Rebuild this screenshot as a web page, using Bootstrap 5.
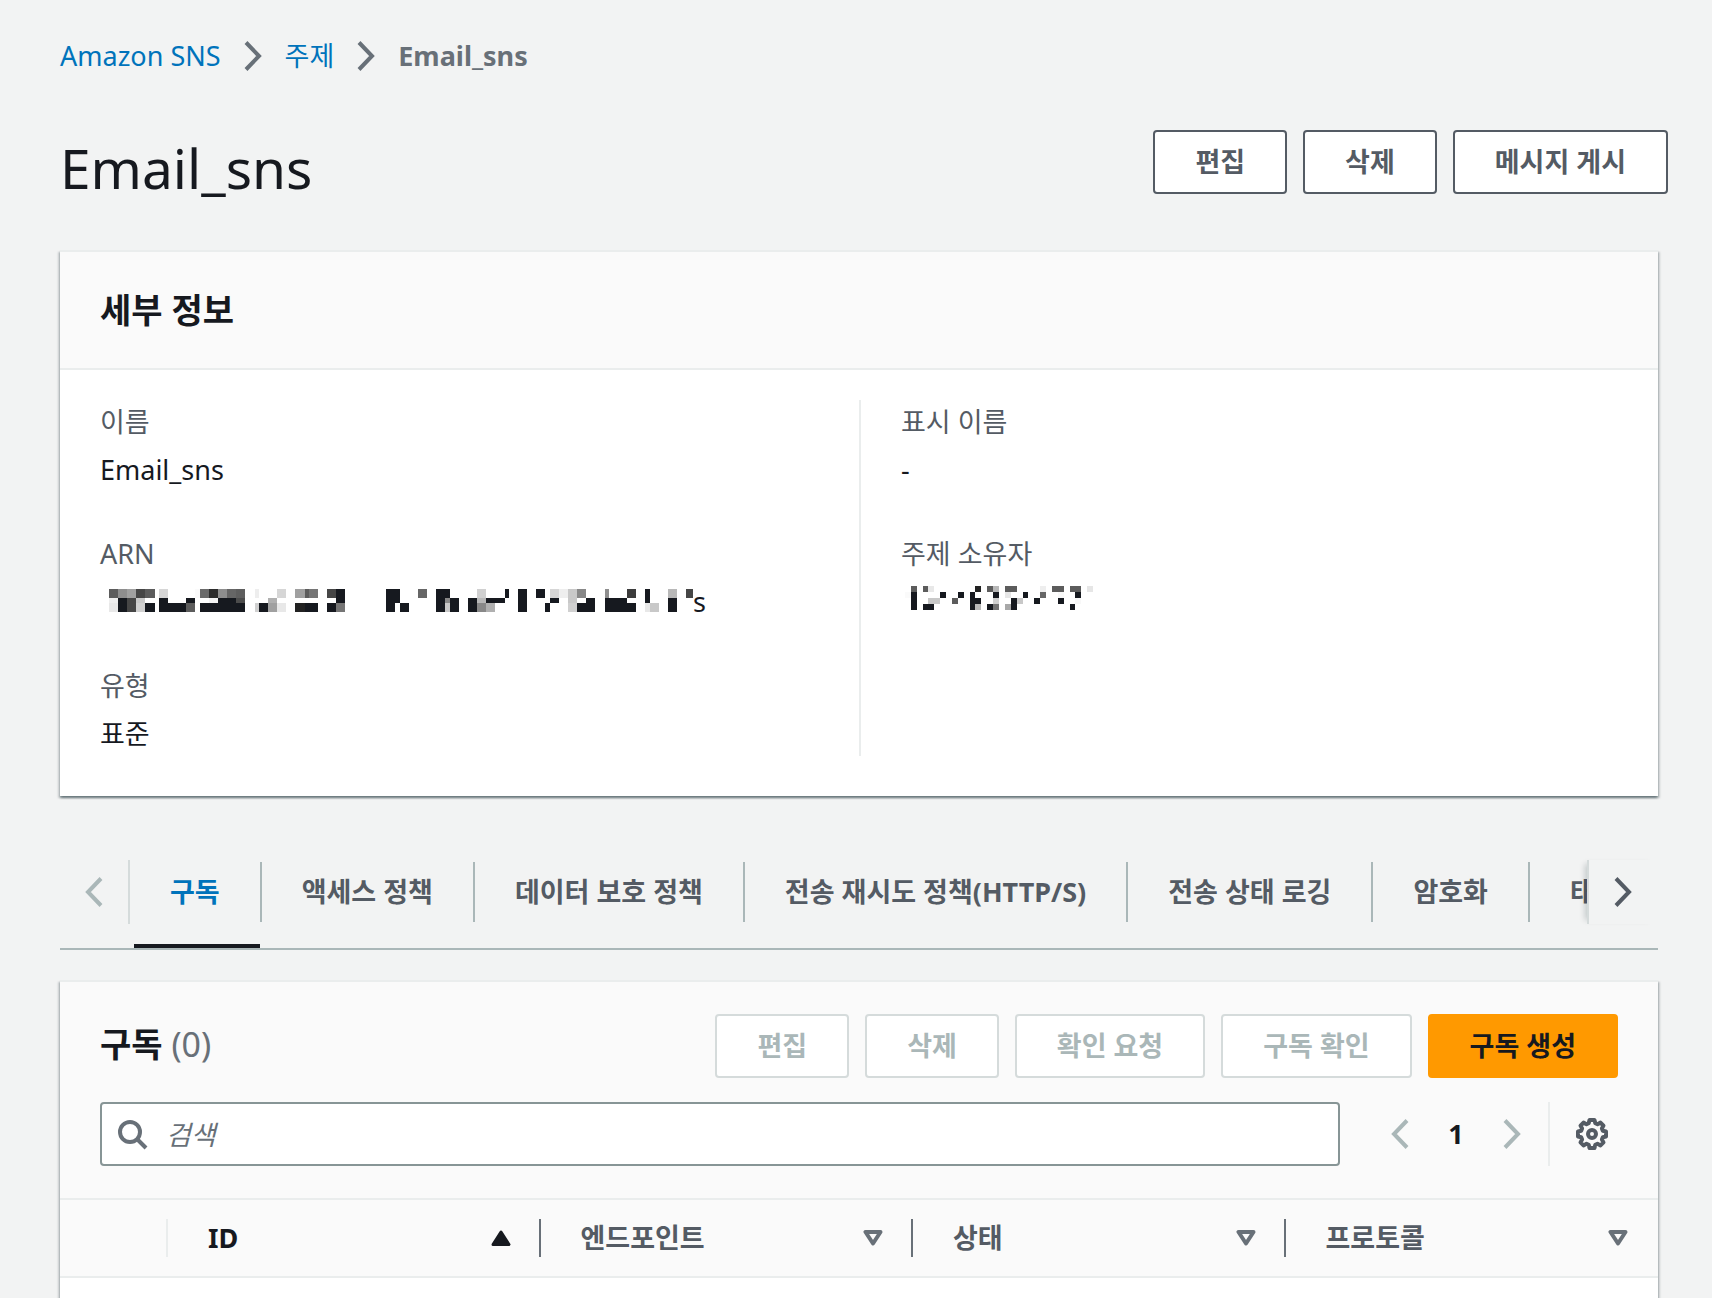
<!DOCTYPE html>
<html lang="ko">
<head>
<meta charset="utf-8">
<meta name="viewport" content="width=device-width, initial-scale=1">
<title>Email_sns - Amazon SNS</title>
<link href="https://cdn.jsdelivr.net/npm/bootstrap@5.3.0/dist/css/bootstrap.min.css" rel="stylesheet">
<style>
body{background:#f2f3f3;color:#16191f;font-family:"Noto Sans","Noto Sans CJK KR",sans-serif;font-size:27px;line-height:44px}
button,input{font-family:inherit}
.page{padding:34px 54px 0 60px}
.crumbs{gap:23px;margin-bottom:52px;color:#687078}
.crumbs a{color:#0073bb;text-decoration:none}
.crumbs .current{font-weight:700}
svg{display:block;flex:none}
.chev{width:18px;height:30px;fill:none;stroke:currentColor;stroke-width:4}
.title-row{margin-bottom:48px}
.title-row h1{font-size:55px;line-height:68px;font-weight:400;padding-top:4px}
.title-row .actions{margin-right:-10px}
.actions{gap:16px}
.btn-aws{--bs-btn-color:#545b64;--bs-btn-bg:#fff;--bs-btn-border-color:#545b64;--bs-btn-border-width:2px;--bs-btn-border-radius:4px;--bs-btn-font-weight:700;--bs-btn-font-size:27px;--bs-btn-line-height:44px;--bs-btn-padding-x:40px;--bs-btn-padding-y:8px;--bs-btn-disabled-color:#aab7b8;--bs-btn-disabled-bg:#fff;--bs-btn-disabled-border-color:#d5dbdb;--bs-btn-disabled-opacity:1}
.btn-create{--bs-btn-color:#16191f;--bs-btn-bg:#ff9900;--bs-btn-border-color:#ff9900}
.panel{background:#fff;border-top:2px solid #eaeded;box-shadow:0 2px 2px rgba(0,28,36,.4),2px 2px 2px rgba(0,28,36,.15),-2px 2px 2px rgba(0,28,36,.15)}
.panel h2{font-size:34px;line-height:44px;font-weight:700}
.panel-head{background:#fafafa;border-bottom:2px solid #eaeded}
.panel-head.plain{padding:36px 40px}
.panel-head.tools{padding:32px 40px}
.details{padding:30px 40px 40px}
.details dl{gap:40px}
.details dt{font-weight:400;color:#545b64;margin-bottom:4px}
.details .second{border-left:2px solid #eaeded;padding-left:40px}
.tabs-bar{margin-top:64px;margin-bottom:30px;border-bottom:2px solid #aab7b8}
.tab-scroll{flex:none;height:64px;padding:0;border:0;background:none;color:#aab7b8}
.tab-scroll.prev{width:70px;padding-left:25px;border-right:2px solid #d5dbdb;margin-right:4px}
.tab-scroll.next{width:71px;padding-left:25px;border-left:2px solid #d5dbdb;color:#545b64;background:#f2f3f3;box-shadow:-6px 0 6px -4px rgba(0,28,36,.2);position:relative}
.tab-list{min-width:0}
.tab-item{white-space:nowrap}
.tab-item button{height:88px;padding:0 40px 20px;border:0;border-bottom:4px solid transparent;border-radius:0;background:none;color:#545b64;font-weight:700;line-height:64px}
.tab-item .active{padding-left:36px;color:#0073bb;border-color:#16191f}
.tab-item::after{content:"";width:2px;height:60px;margin-top:2px;background:#aab7b8}
.count{color:#687078;font-weight:400}
.search-icon{left:18px;top:18px;z-index:2}
.search-box{height:64px;border:2px solid #879596;border-radius:4px;padding:8px 16px 8px 64px;font-size:27px;line-height:44px}
.search-box::placeholder{color:#687078;font-style:italic;opacity:1}
.tool-row{margin-top:24px}
.pager{margin-left:32px}
.pager button,.gear{height:64px;padding:0;border:0;background:none;color:#aab7b8}
.pager button{width:56px}
.pager .now{width:56px;color:#16191f;font-weight:700}
.pager-rule{width:2px;height:64px;background:#eaeded;margin:0 16px 0 8px}
.gear{width:52px}
.gear.gear{color:#545b64}
.subs{table-layout:fixed;border-collapse:separate;border-spacing:0}
.subs th{padding:19px 0;background:#fafafa;border-bottom:2px solid #eaeded;color:#545b64;font-weight:700}
.subs .pick{width:108px}
.th-in{height:38px;padding:0 28px 0 40px;border-right:2px solid #687078;line-height:38px}
.pick .th-in{border-color:#eaeded}
.subs th:last-child .th-in{border:0;padding-right:30px}
.subs .sorted{color:#16191f}
</style>
<script src="https://cdn.jsdelivr.net/npm/bootstrap@5.3.0/dist/js/bootstrap.bundle.min.js" defer></script>
</head>
<body>
<div class="page d-flex flex-column min-vh-100">
  <nav aria-label="breadcrumb">
    <ol class="crumbs list-unstyled d-flex align-items-center">
      <li><a href="#">Amazon SNS</a></li>
      <li aria-hidden="true"><svg class="chev" viewBox="0 0 18 30"><path d="M2 1.500L15 15L2 28.500"/></svg></li>
      <li><a href="#">주제</a></li>
      <li aria-hidden="true"><svg class="chev" viewBox="0 0 18 30"><path d="M2 1.500L15 15L2 28.500"/></svg></li>
      <li class="current" aria-current="page">Email_sns</li>
    </ol>
  </nav>

  <header class="title-row d-flex justify-content-between align-items-start">
    <h1 class="mb-0">Email_sns</h1>
    <div class="actions d-flex">
      <button type="button" class="btn btn-aws">편집</button>
      <button type="button" class="btn btn-aws">삭제</button>
      <button type="button" class="btn btn-aws">메시지 게시</button>
    </div>
  </header>

  <section class="panel">
    <div class="panel-head plain"><h2 class="mb-0">세부 정보</h2></div>
    <div class="details">
      <div class="row g-0">
        <dl class="col-6 d-flex flex-column mb-0">
          <div><dt>이름</dt><dd class="mb-0">Email_sns</dd></div>
          <div><dt>ARN</dt><dd class="mb-0 d-flex align-items-center"><svg id="arn" width="593" height="27" viewBox="24 207 1453 81" preserveAspectRatio="none" shape-rendering="crispEdges" aria-hidden="true"></svg>s</dd></div>
          <div><dt>유형</dt><dd class="mb-0">표준</dd></div>
        </dl>
        <dl class="second col-6 d-flex flex-column mb-0">
          <div><dt>표시 이름</dt><dd class="mb-0">-</dd></div>
          <div><dt>주제 소유자</dt><dd class="mb-0"><svg id="owner" width="200" height="36" viewBox="186 570 600 108" shape-rendering="crispEdges" aria-hidden="true"></svg></dd></div>
        </dl>
      </div>
    </div>
  </section>

  <div class="tabs-bar d-flex">
    <button type="button" class="tab-scroll prev" aria-label="이전 탭" disabled><svg class="chev" viewBox="0 0 18 30"><path d="M16 1.500L3 15L16 28.500"/></svg></button>
    <ul class="tab-list nav flex-nowrap flex-grow-1 overflow-hidden" role="tablist">
      <li class="tab-item d-flex" role="presentation"><button type="button" class="active" role="tab" aria-selected="true">구독</button></li>
      <li class="tab-item d-flex" role="presentation"><button type="button" role="tab">액세스 정책</button></li>
      <li class="tab-item d-flex" role="presentation"><button type="button" role="tab">데이터 보호 정책</button></li>
      <li class="tab-item d-flex" role="presentation"><button type="button" role="tab">전송 재시도 정책(HTTP/S)</button></li>
      <li class="tab-item d-flex" role="presentation"><button type="button" role="tab">전송 상태 로깅</button></li>
      <li class="tab-item d-flex" role="presentation"><button type="button" role="tab">암호화</button></li>
      <li class="tab-item d-flex" role="presentation"><button type="button" role="tab">태그</button></li>
    </ul>
    <button type="button" class="tab-scroll next" aria-label="다음 탭"><svg class="chev" viewBox="0 0 18 30"><path d="M2 1.500L15 15L2 28.500"/></svg></button>
  </div>

  <section class="panel flex-grow-1">
    <div class="panel-head tools">
      <div class="d-flex justify-content-between align-items-start">
        <h2 class="mb-0 pt-2">구독 <span class="count">(0)</span></h2>
        <div class="actions d-flex">
          <button type="button" class="btn btn-aws" disabled>편집</button>
          <button type="button" class="btn btn-aws" disabled>삭제</button>
          <button type="button" class="btn btn-aws" disabled>확인 요청</button>
          <button type="button" class="btn btn-aws" disabled>구독 확인</button>
          <button type="button" class="btn btn-aws btn-create">구독 생성</button>
        </div>
      </div>
      <div class="tool-row d-flex align-items-center">
        <div class="position-relative flex-grow-1">
          <svg class="search-icon position-absolute" width="30" height="30" viewBox="0 0 30 30" fill="none" stroke="#687078" stroke-width="4" aria-hidden="true"><circle cx="12" cy="12" r="10"/><path d="M19 19L28 28"/></svg>
          <input type="search" class="search-box form-control" placeholder="검색" aria-label="검색">
        </div>
        <div class="pager d-flex">
          <button type="button" class="d-flex align-items-center justify-content-center" aria-label="이전 페이지" disabled><svg class="chev" viewBox="0 0 18 30"><path d="M16 1.500L3 15L16 28.500"/></svg></button>
          <button type="button" class="now">1</button>
          <button type="button" class="d-flex align-items-center justify-content-center" aria-label="다음 페이지" disabled><svg class="chev" viewBox="0 0 18 30"><path d="M2 1.500L15 15L2 28.500"/></svg></button>
        </div>
        <span class="pager-rule"></span>
        <button type="button" class="gear d-flex align-items-center justify-content-center" aria-label="기본 설정"><svg width="32" height="32" viewBox="0 0 32 32" fill="none" stroke="currentColor" stroke-width="4" stroke-linejoin="round" aria-hidden="true"><path d="M13.500 2h5l.8 3.200l2.200 1l3-1.600l3 3l-1.600 2.900l.9 2.200l3.200.8v5l-3.200.8l-.9 2.200l1.600 2.900l-3 3l-3-1.600l-2.200 1l-.8 3.200h-5l-.8-3.200l-2.200-1l-3 1.600l-3-3l1.600-2.900l-.9-2.200l-3.200-.8v-5l3.200-.8l.9-2.200l-1.600-2.900l3-3l3 1.600l2.200-1z"/><circle cx="16" cy="16" r="4"/></svg></button>
      </div>
    </div>
    <table class="subs w-100">
      <thead>
        <tr>
          <th class="pick" aria-label="선택"><div class="th-in"></div></th>
          <th class="sorted" aria-sort="ascending"><div class="th-in d-flex align-items-center justify-content-between">ID<svg width="20" height="16" viewBox="0 0 20 16" fill="currentColor" stroke="currentColor" stroke-width="3" stroke-linejoin="round" aria-hidden="true"><path d="M10 2L18 14.500H2z"/></svg></div></th>
          <th><div class="th-in d-flex align-items-center justify-content-between">엔드포인트<svg width="20" height="16" viewBox="0 0 20 16" fill="none" stroke="#687078" stroke-width="4" stroke-linejoin="round" aria-hidden="true"><path d="M2.500 2H17.500L10 13.500z"/></svg></div></th>
          <th><div class="th-in d-flex align-items-center justify-content-between">상태<svg width="20" height="16" viewBox="0 0 20 16" fill="none" stroke="#687078" stroke-width="4" stroke-linejoin="round" aria-hidden="true"><path d="M2.500 2H17.500L10 13.500z"/></svg></div></th>
          <th><div class="th-in d-flex align-items-center justify-content-between">프로토콜<svg width="20" height="16" viewBox="0 0 20 16" fill="none" stroke="#687078" stroke-width="4" stroke-linejoin="round" aria-hidden="true"><path d="M2.500 2H17.500L10 13.500z"/></svg></div></th>
        </tr>
      </thead>
      <tbody></tbody>
    </table>
  </section>
</div>
<script>
// Masked identifiers: each row is [top, height, "left-right:grey ..."], k is the text colour.
function mosaic(id, rows) {
  let out = '';
  for (const [y, h, cells] of rows)
    for (const cell of cells.split(' ')) {
      const [span, tone] = cell.split(':');
      const [a, b] = span.split('-').map(Number);
      const fill = tone === 'k' ? '#16191f' : '#' + tone.repeat(3);
      out += `<rect x="${a}" y="${y}" width="${b - a}" height="${h}" fill="${fill}"/>`;
    }
  document.getElementById(id).innerHTML = out;
}
mosaic('arn', [
  [207, 27, '47-69:5c 69-91:8e 91-113:a0 113-135:46 135-159:5c 169-191:d6 257-269:fa 269-292:6a 292-314:2c 314-336:8e 336-358:66 358-380:5e 404-414:ee 458-480:d6 502-527:a0 527-537:5c 537-559:75 581-603:46 603-625:k 725-759:k 804-826:66 848-882:k 948-970:d0 1017-1027:k 1049-1071:k 1093-1115:k 1127-1149:d6 1149-1171:ee 1171-1193:c8 1193-1215:88 1262-1272:8e 1316-1338:3c 1360-1372:k 1416-1438:b8 1460-1482:46'],
  [234, 15, '47-69:ee 69-91:k 91-113:46 113-135:c8 169-191:k 235-257:k 292-314:f4 314-358:k 358-380:4c 436-458:b0 603-625:k 725-759:k 848-870:k 870-882:88 882-904:k 926-948:k 948-970:b8 970-1017:k 1049-1071:k 1127-1149:k 1171-1193:c8 1215-1237:k 1262-1316:k 1360-1372:k 1416-1438:k'],
  [249, 27, '47-69:e8 69-91:k 91-113:46 113-135:d0 135-159:k 169-235:k 235-257:5c 269-380:k 404-414:d0 414-436:k 436-458:a0 458-480:e8 502-527:22 527-559:k 581-603:k 603-625:75 725-747:k 759-782:k 848-870:k 870-882:c8 882-904:k 926-948:k 948-970:88 970-992:b0 1049-1071:k 1115-1127:k 1171-1193:d0 1193-1237:k 1262-1338:k 1360-1372:e8 1372-1394:c8 1416-1438:k']
]);
mosaic('owner', [
  [588, 18, '216-234:5c 252-267:5c 267-285:e8 408-426:22 444-462:5c 462-480:b8 498-534:5c 603-621:ee 639-675:5c 693-726:5c 744-762:e6'],
  [606, 18, '198-216:fa 216-234:k 303-321:k 357-375:k 393-408:k 462-480:k 498-516:e6 552-567:k 603-621:66 657-675:f8 708-726:k'],
  [624, 18, '216-234:k 267-303:c8 339-357:5c 393-426:k 462-480:d0 516-534:k 534-552:c8 585-603:k 657-675:k 708-726:f8'],
  [642, 18, '216-234:k 252-285:k 393-408:k 408-426:b8 444-462:k 462-480:75 498-516:a8 516-534:k 693-708:k']
]);
</script>
</body>
</html>
